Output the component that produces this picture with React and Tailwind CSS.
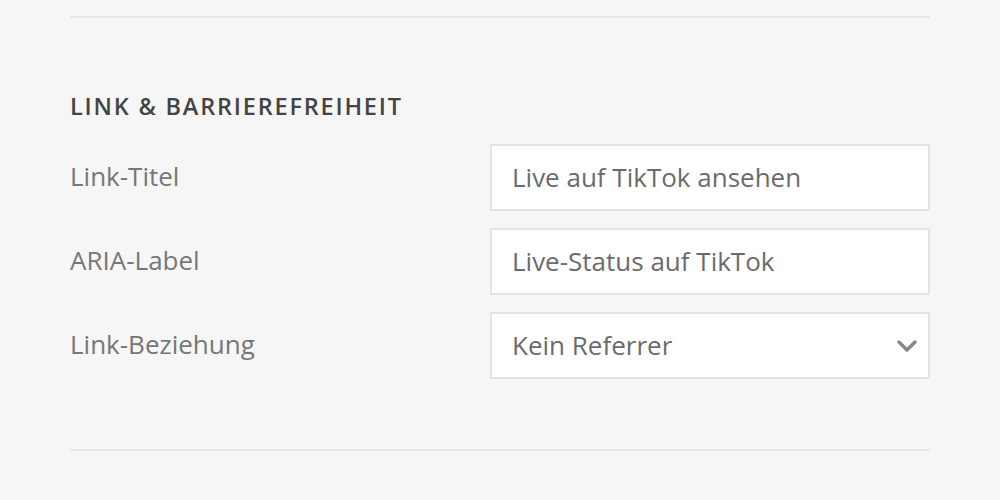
export default function App() {
  const rows = [
    { label: "Link-Titel", value: "Live auf TikTok ansehen" },
    { label: "ARIA-Label", value: "Live-Status auf TikTok" },
  ];
  return (
    <div className="w-[1000px] h-[500px] bg-[#f6f6f6] overflow-hidden" style={{ fontFamily: '"Open Sans", sans-serif' }}>
      <div className="mx-[70px] pt-[16px]">
        <div className="h-[2px] bg-[#e6e6e6]" />
        <h2
          className="mt-[75px] text-[23.5px] leading-[27px] font-semibold text-[#444] tracking-[1.8px]"
          style={{ fontFamily: '"Open Sans", sans-serif' }}
        >
          LINK &amp; BARRIEREFREIHEIT
        </h2>
        <div className="mt-[24px] flex flex-col gap-[17px]">
          {rows.map((r) => (
            <div key={r.label} className="flex items-start">
              <div className="w-[420px] text-[26px] leading-[36px] text-[#777] pt-[14px]">{r.label}</div>
              <div className="flex-1 h-[67px] bg-white border-2 border-[#e4e4e4] flex items-center px-[20px] text-[26px] text-[#6b6b6b]">
                {r.value}
              </div>
            </div>
          ))}
          <div className="flex items-start">
            <div className="w-[420px] text-[26px] leading-[36px] text-[#777] pt-[14px]">Link-Beziehung</div>
            <div className="flex-1 h-[67px] bg-white border-2 border-[#e4e4e4] flex items-center justify-between pl-[20px] pr-[10px] text-[26px] text-[#6b6b6b]">
              <span>Kein Referrer</span>
              <svg width="22" height="14" viewBox="0 0 22 14" fill="none">
                <path d="M3 3 L11 11 L19 3" stroke="#888" strokeWidth="3.5" strokeLinecap="round" strokeLinejoin="round" />
              </svg>
            </div>
          </div>
        </div>
        <div className="mt-[70px] h-[2px] bg-[#e6e6e6]" />
      </div>
    </div>
  );
}
